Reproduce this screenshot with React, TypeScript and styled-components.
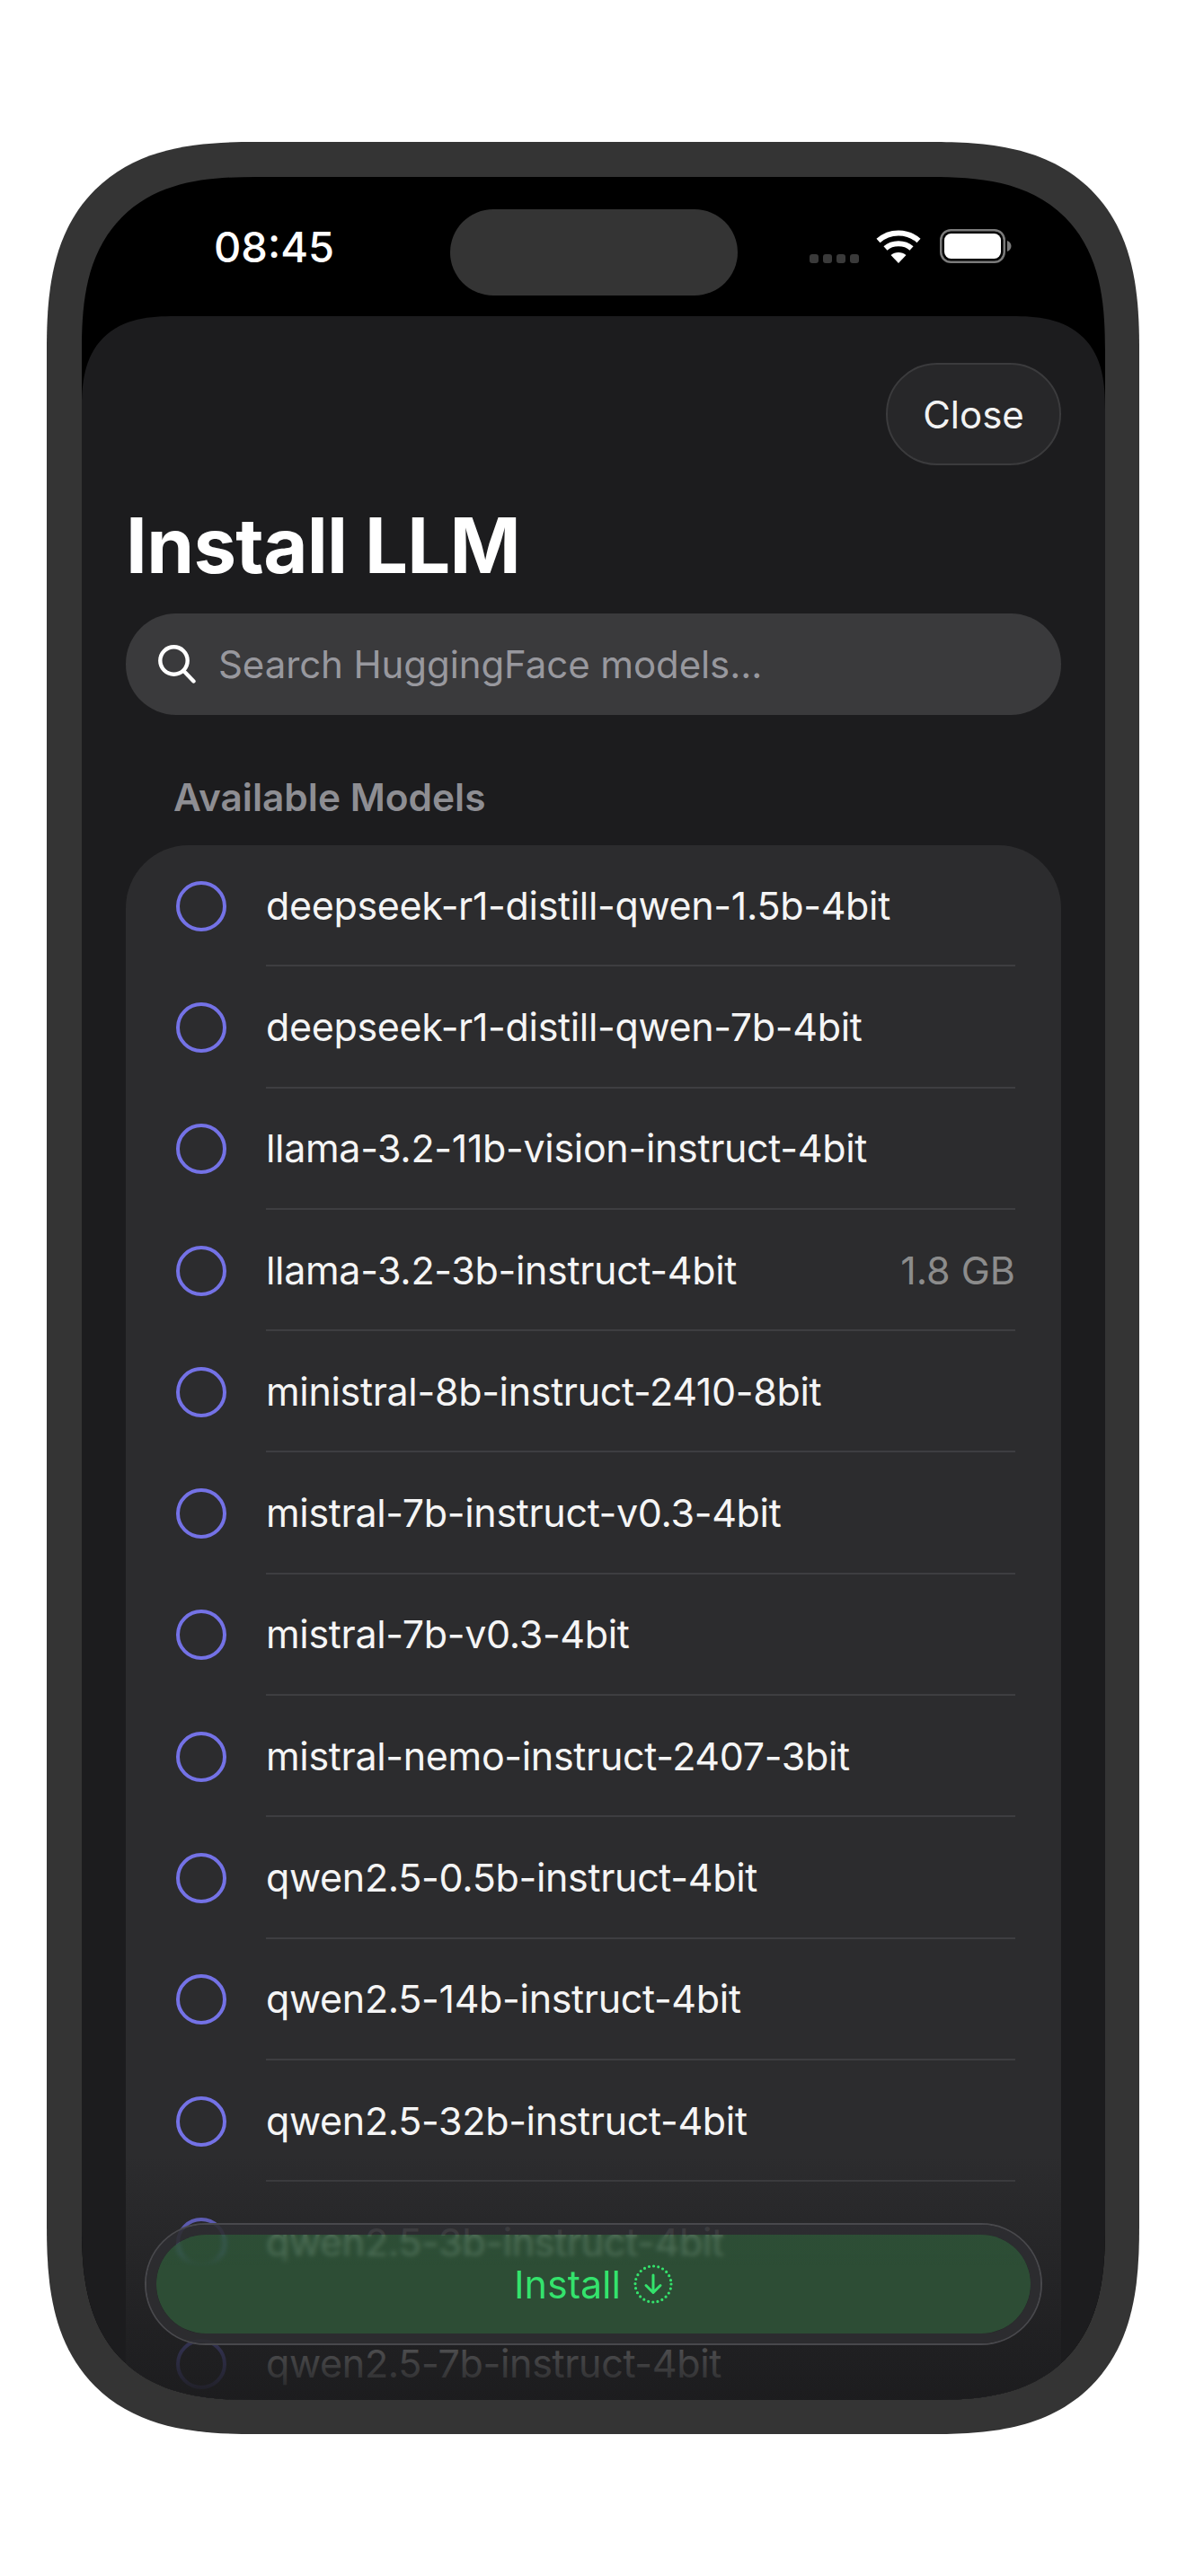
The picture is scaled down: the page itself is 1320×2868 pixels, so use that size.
import React from "react";
import styled, { createGlobalStyle } from "styled-components";

const GlobalStyle = createGlobalStyle`
  html, body {
    margin: 0;
    padding: 0;
    background: #fff;
  }
  body {
    font-family: Inter, "Liberation Sans", sans-serif;
  }
`;

const Page = styled.div`
  display: flex;
  align-items: flex-start;
  height: 2868px;
  padding: 158px 0 0 52px;
  box-sizing: border-box;
`;

const Device = styled.div`
  width: 1216px;
  height: 2552px;
  padding: 39px 38px 38px 39px;
  box-sizing: border-box;
  background: #343434;
  border-radius: 232px;
  corner-shape: superellipse(1.4);
  flex-shrink: 0;
`;

const Screen = styled.div`
  position: relative;
  display: flex;
  flex-direction: column;
  height: 100%;
  background: #000;
  border-radius: 194px;
  corner-shape: superellipse(1.4);
  overflow: hidden;
`;

const StatusBar = styled.div`
  display: flex;
  align-items: flex-start;
  height: 155px;
  flex-shrink: 0;
  padding: 36px 0 0 147px;
  box-sizing: border-box;
`;

const Time = styled.div`
  width: 263px;
  margin-top: 16px;
  font-size: 47px;
  line-height: 52px;
  font-weight: 500;
  color: #fff;
`;

const Island = styled.div`
  width: 320px;
  height: 96px;
  border-radius: 48px;
  background: #343434;
`;

const StatusIcons = styled.div`
  display: flex;
  align-items: flex-end;
  margin: 22px 0 0 80px;
`;

const Signal = styled.div`
  display: flex;
  gap: 5px;
  margin-right: 19px;
`;

const SignalDot = styled.span`
  width: 10px;
  height: 10px;
  border-radius: 3px;
  background: #3a3a3a;
`;

const Battery = styled.svg`
  margin-left: 21px;
`;

const Sheet = styled.div`
  flex: 1;
  min-height: 0;
  padding: 0 49px;
  background: #1c1c1e;
  border-radius: 104px 104px 0 0;
  corner-shape: superellipse(1.4);
  overflow: hidden;
`;

const CloseRow = styled.div`
  display: flex;
  justify-content: flex-end;
  padding-top: 52px;
`;

const CloseButton = styled.button`
  width: 195px;
  height: 114px;
  padding: 0;
  font: 400 42px Inter, sans-serif;
  color: #f2f2f2;
  background: #272729;
  border: 2px solid #3b3b3d;
  border-radius: 57px;
`;

const Title = styled.h1`
  margin: 40px 0 0;
  font-size: 85px;
  line-height: 100px;
  font-weight: 700;
  letter-spacing: -0.7px;
  color: #fff;
`;

const SearchField = styled.div`
  display: flex;
  align-items: center;
  gap: 25px;
  height: 113px;
  margin-top: 25px;
  padding-left: 36px;
  background: #3a3a3c;
  border-radius: 56px;
`;

const Placeholder = styled.span`
  font-size: 42px;
  letter-spacing: -0.1px;
  color: #98989e;
`;

const SectionLabel = styled.h2`
  margin: 66px 0 0;
  padding-left: 53px;
  font-size: 42.4px;
  line-height: 52px;
  font-weight: 600;
  color: #8e8e93;
`;

const ModelList = styled.div`
  margin-top: 27px;
  background: #2c2c2e;
  border-radius: 70px 70px 0 0;
`;

const Row = styled.div`
  display: flex;
  align-items: center;
  height: 135.3px;
  padding-left: 56px;
`;

const Radio = styled.span`
  width: 56px;
  height: 56px;
  box-sizing: border-box;
  margin-right: 44px;
  flex-shrink: 0;
  border: 4px solid #7472e6;
  border-radius: 50%;
`;

const RowBody = styled.div`
  flex: 1;
  display: flex;
  align-items: center;
  justify-content: space-between;
  height: 100%;
  margin-right: 51px;
  border-bottom: 2px solid #3e3e41;
  box-sizing: border-box;
`;

const ModelName = styled.span`
  font-size: 43px;
  letter-spacing: -0.33px;
  color: #f5f5f5;
`;

const ModelSize = styled.span`
  font-size: 43px;
  color: #8c8c8c;
`;

const Fade = styled.div`
  position: absolute;
  left: 0;
  right: 0;
  bottom: 0;
  height: 271px;
  background: linear-gradient(to bottom, rgba(28, 28, 30, 0), rgba(28, 28, 30, 0.98));
  pointer-events: none;
`;

const InstallShell = styled.div`
  position: absolute;
  left: 72px;
  right: 72px;
  bottom: 63px;
  height: 132px;
  box-sizing: border-box;
  border: 11px solid rgba(46, 46, 49, 0.9);
  border-radius: 66px;
  box-shadow: 0 0 0 2px #48484c;
`;

const InstallButton = styled.button`
  display: flex;
  align-items: center;
  justify-content: center;
  gap: 14px;
  width: 100%;
  height: 100%;
  padding: 0;
  font: 400 43px Inter, sans-serif;
  color: #34e36c;
  /* the row behind only shows through the top edge of the glass */
  background: linear-gradient(to bottom, rgba(47, 90, 58, 0.76), rgba(47, 90, 58, 0.76) 22px, #2d4d35 36px);
  border: none;
  border-radius: 55px;
  backdrop-filter: blur(2.5px);
`;

const models: { name: string; size?: string }[] = [
  { name: "deepseek-r1-distill-qwen-1.5b-4bit" },
  { name: "deepseek-r1-distill-qwen-7b-4bit" },
  { name: "llama-3.2-11b-vision-instruct-4bit" },
  { name: "llama-3.2-3b-instruct-4bit", size: "1.8 GB" },
  { name: "ministral-8b-instruct-2410-8bit" },
  { name: "mistral-7b-instruct-v0.3-4bit" },
  { name: "mistral-7b-v0.3-4bit" },
  { name: "mistral-nemo-instruct-2407-3bit" },
  { name: "qwen2.5-0.5b-instruct-4bit" },
  { name: "qwen2.5-14b-instruct-4bit" },
  { name: "qwen2.5-32b-instruct-4bit" },
  { name: "qwen2.5-3b-instruct-4bit" },
  { name: "qwen2.5-7b-instruct-4bit" },
];

const WifiIcon = () => (
  <svg width="50" height="38" viewBox="0 0 50 38" fill="none" stroke="#fff" strokeWidth="6">
    <path d="M2.5 13 C15 1.5 35 1.5 47.5 13" />
    <path d="M10.5 21.5 C18 14.5 32 14.5 39.5 21.5" />
    <path d="M25 38 L16.5 29 C21 25 29 25 33.5 29 Z" fill="#fff" stroke="none" />
  </svg>
);

const BatteryIcon = () => (
  <Battery width="80" height="38" viewBox="0 0 80 38" fill="none">
    <rect x="1.25" y="1.25" width="70.5" height="35.5" rx="11" stroke="#7a7a7a" strokeWidth="2.5" />
    <rect x="5" y="5" width="63" height="28" rx="7.5" fill="#fff" />
    <path d="M75 13 C78 14 79.5 16.5 79.5 19 C79.5 21.5 78 24 75 25 Z" fill="#7a7a7a" />
  </Battery>
);

const SearchIcon = () => (
  <svg width="42" height="43" viewBox="0 0 42 43" fill="none" stroke="#fff" strokeWidth="4.4" strokeLinecap="round">
    <circle cx="17.5" cy="17.5" r="15.2" />
    <path d="M28.5 29 L39.5 40.5" />
  </svg>
);

const DownloadIcon = () => (
  <svg width="44" height="44" viewBox="0 0 44 44" fill="none" stroke="#34e36c" strokeLinecap="round" strokeLinejoin="round">
    <circle cx="22" cy="22" r="20" strokeWidth="3.2" strokeDasharray="0 5.236" />
    <path d="M22 12 V31 M14 23.5 L22 31.5 L30 23.5" strokeWidth="3" />
  </svg>
);

export default function App() {
  return (
    <>
      <GlobalStyle />
      <Page>
        <Device>
          <Screen>
            <StatusBar>
              <Time>08:45</Time>
              <Island />
              <StatusIcons>
                <Signal>
                  <SignalDot />
                  <SignalDot />
                  <SignalDot />
                  <SignalDot />
                </Signal>
                <WifiIcon />
                <BatteryIcon />
              </StatusIcons>
            </StatusBar>
            <Sheet>
              <CloseRow>
                <CloseButton>Close</CloseButton>
              </CloseRow>
              <Title>Install LLM</Title>
              <SearchField>
                <SearchIcon />
                <Placeholder>Search HuggingFace models...</Placeholder>
              </SearchField>
              <SectionLabel>Available Models</SectionLabel>
              <ModelList>
                {models.map((model) => (
                  <Row key={model.name}>
                    <Radio />
                    <RowBody>
                      <ModelName>{model.name}</ModelName>
                      {model.size && <ModelSize>{model.size}</ModelSize>}
                    </RowBody>
                  </Row>
                ))}
              </ModelList>
            </Sheet>
            <Fade />
            <InstallShell>
              <InstallButton>
                Install
                <DownloadIcon />
              </InstallButton>
            </InstallShell>
          </Screen>
        </Device>
      </Page>
    </>
  );
}
